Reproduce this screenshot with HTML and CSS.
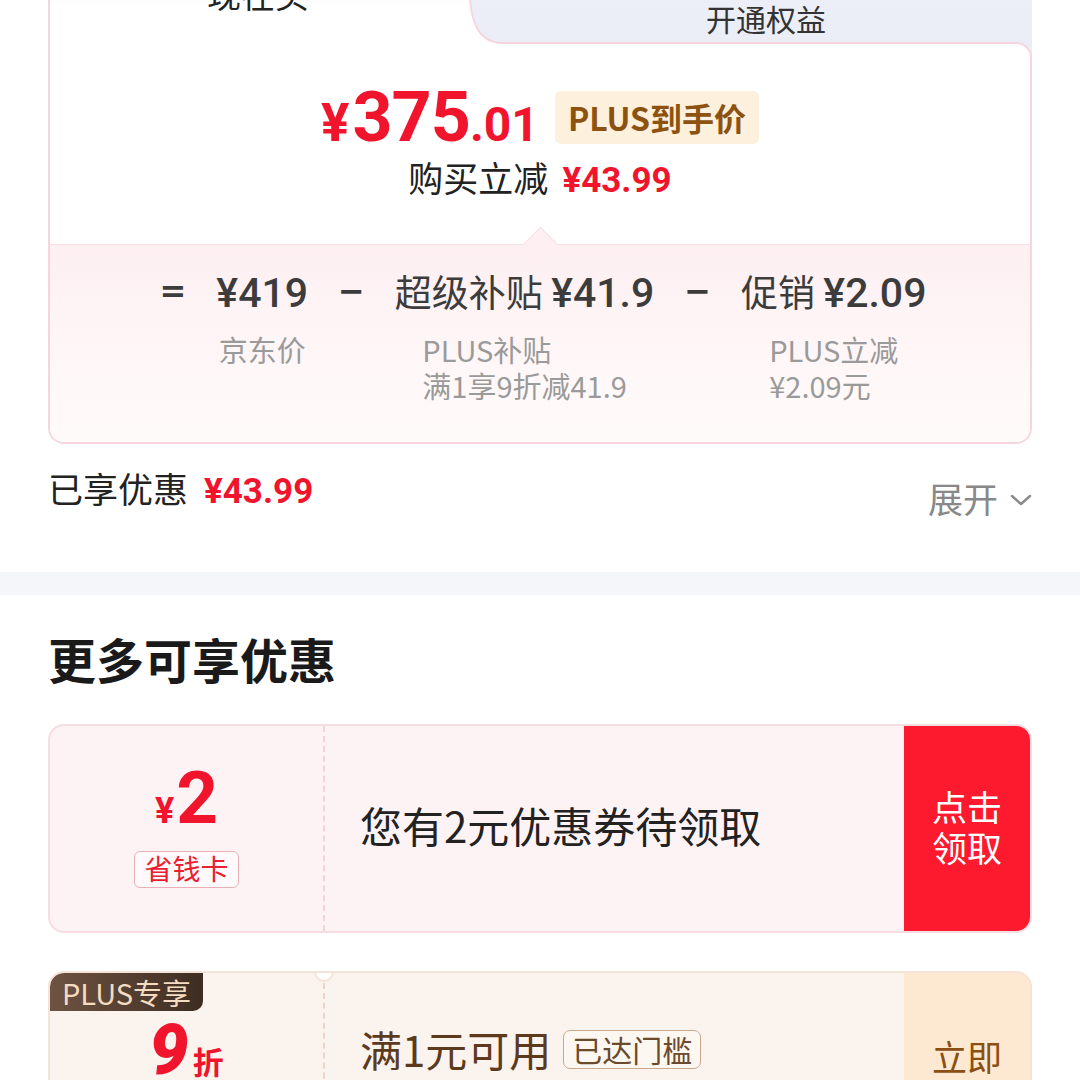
FILE: index.html
```html
<!DOCTYPE html>
<html lang="zh-CN">
<head>
<meta charset="utf-8">
<title>优惠明细</title>
<link rel="stylesheet" href="styles.css">
</head>
<body>
<div class="page">
  <section class="price-section">
    <div class="price-card">
      <div class="tabs">
        <div class="tab-now">现在买</div>
        <svg class="tab-curve" width="34" height="100" viewBox="0 0 34 100">
          <path d="M0 0 L2 0 L4 42 C6 62 11 83 34 85 L34 100 L0 100 Z" fill="#ffffff"/>
          <path d="M2 0 L4 42 C6 62 11 83 34 85" fill="none" stroke="#f6d6de" stroke-width="2"/>
        </svg>
        <div class="tab-plus">开通权益</div>
      </div>
      <div class="card-body">
        <div class="price-top">
          <div class="price-row">
            <span class="price"><span class="yen">¥</span><span class="int">375</span><span class="dec">.01</span></span>
            <span class="plus-badge">PLUS到手价</span>
          </div>
          <div class="save-row">购买立减<span class="save-num">¥43.99</span></div>
        </div>
        <div class="breakdown">
          <div class="bd-row">
            <span class="op">=</span>
            <div class="bd-col">
              <div class="bd-main"><span class="num">¥419</span></div>
              <div class="bd-sub">京东价</div>
            </div>
            <span class="op">−</span>
            <div class="bd-col">
              <div class="bd-main">超级补贴 <span class="num">¥41.9</span></div>
              <div class="bd-sub">PLUS补贴<br>满1享9折减41.9</div>
            </div>
            <span class="op">−</span>
            <div class="bd-col">
              <div class="bd-main">促销 <span class="num">¥2.09</span></div>
              <div class="bd-sub">PLUS立减<br>¥2.09元</div>
            </div>
          </div>
        </div>
      </div>
    </div>
    <div class="enjoyed">
      <div class="enjoyed-left">已享优惠<span class="enjoyed-num">¥43.99</span></div>
      <div class="expand">展开
        <svg class="chevron" width="22" height="14" viewBox="0 0 22 14"><polyline points="2,3 11,11 20,3" fill="none" stroke="#8a8a8a" stroke-width="2.4" stroke-linecap="round" stroke-linejoin="round"/></svg>
      </div>
    </div>
  </section>

  <div class="band"></div>

  <section class="more">
    <h2 class="more-title">更多可享优惠</h2>

    <div class="coupon coupon-red">
      <div class="cp-left">
        <div class="amt"><span class="amt-yen">¥</span><span class="amt-num">2</span></div>
        <div class="cp-tag">省钱卡</div>
      </div>
      <div class="cp-mid">您有2元优惠券待领取</div>
      <div class="cp-btn">点击<br>领取</div>
    </div>

    <div class="coupon coupon-plus">
      <div class="plus-tag">PLUS专享</div>
      <div class="notch"></div>
      <div class="cp-left cp-left-top">
        <div class="disc"><span class="disc-num">9</span><span class="disc-unit">折</span></div>
      </div>
      <div class="cp-mid cp-mid-top">满1元可用<span class="reach-tag">已达门槛</span></div>
      <div class="cp-btn cp-btn-plus">立即<br>领取</div>
    </div>
  </section>
</div>
</body>
</html>
```

FILE: styles.css
```css
html, body {
  margin: 0;
  padding: 0;
}
body {
  width: 1080px;
  height: 1080px;
  overflow: hidden;
  background: #ffffff;
  font-family: "Noto Sans CJK SC", "Noto Sans", sans-serif;
  color: #222222;
}

.price-section {
  padding: 0 48px;
}

.price-card {
  margin-top: -42px;
}

.tabs {
  display: flex;
  height: 100px;
  margin-bottom: -16px;
  background: linear-gradient(#eef0f8, #eaedf6);
}

.tab-now {
  flex: 0 0 418px;
  box-sizing: border-box;
  border-left: 2px solid #f6d6de;
  background: linear-gradient(#f6f6f6, #ffffff 50%);
  position: relative;
  z-index: 2;
  text-align: center;
  padding-top: 16px;
  font-size: 34px;
  line-height: 40px;
  color: #222222;
}

.tab-curve {
  flex: 0 0 34px;
  display: block;
  position: relative;
  z-index: 2;
}

.tab-plus {
  flex: 1;
  height: 84px;
  box-sizing: border-box;
  display: flex;
  align-items: flex-end;
  justify-content: center;
  padding-bottom: 6px;
  font-size: 30px;
  line-height: 36px;
  color: #333333;
}

.card-body {
  position: relative;
  z-index: 1;
  background: #ffffff;
  border: 2px solid #f6d6de;
  border-radius: 0 16px 16px 16px;
  overflow: hidden;
}

.price-top {
  padding: 38px 0 41px;
  text-align: center;
}

.price-row {
  display: flex;
  justify-content: center;
  align-items: center;
  gap: 16px;
  height: 70px;
}

.price {
  display: flex;
  align-items: baseline;
  color: #f0142d;
  font-family: Roboto, "Noto Sans", sans-serif;
  font-weight: 700;
  line-height: 1;
}
.yen {
  font-size: 53px;
  margin-right: 3px;
}
.int {
  font-size: 70px;
  letter-spacing: -1px;
}
.dec {
  font-size: 48px;
}

.plus-badge {
  background: #fdf0dc;
  color: #8d5210;
  font-weight: 700;
  font-size: 32px;
  height: 53px;
  line-height: 53px;
  padding: 0 13px;
  border-radius: 6px;
}

.save-row {
  margin-top: 3px;
  font-size: 35px;
  line-height: 44px;
  color: #222222;
}
.save-num {
  margin-left: 14px;
  color: #f0142d;
  font-family: Roboto, "Noto Sans", sans-serif;
  font-weight: 700;
}

.breakdown {
  position: relative;
  height: 198px;
  box-sizing: border-box;
  border-top: 1px solid #f9e1e6;
  background: linear-gradient(#fdeff2, #fff8f8 70%, #fffafa);
  padding-top: 22px;
}
.breakdown::before {
  content: "";
  position: absolute;
  left: 50%;
  top: -13px;
  width: 24px;
  height: 24px;
  margin-left: -12px;
  background: #fdeff2;
  border-top: 1px solid #f9e1e6;
  border-left: 1px solid #f9e1e6;
  transform: rotate(45deg);
}

.bd-row {
  display: flex;
  justify-content: center;
  align-items: flex-start;
  gap: 30px;
  margin-left: 6px;
}
.op {
  font-family: "DejaVu Sans", sans-serif;
  font-size: 32px;
  font-weight: 700;
  line-height: 48px;
  color: #3c3c3c;
}
.bd-col {
  display: flex;
  flex-direction: column;
  align-items: center;
}
.bd-main {
  font-size: 37px;
  line-height: 48px;
  color: #3c3c3c;
  white-space: nowrap;
}
.bd-main .num {
  font-family: Roboto, sans-serif;
  font-size: 41px;
  font-weight: 500;
}
.bd-sub {
  margin-top: 14px;
  font-size: 29px;
  line-height: 36px;
  color: #9a9a9a;
  text-align: left;
  white-space: nowrap;
}

.enjoyed {
  display: flex;
  align-items: center;
  justify-content: space-between;
  padding: 24px 0 0 0;
  height: 44px;
  margin-bottom: 60px;
}
.enjoyed-left {
  font-size: 35px;
  line-height: 44px;
  color: #222222;
}
.enjoyed-num {
  margin-left: 16px;
  color: #f0142d;
  font-family: Roboto, sans-serif;
  font-weight: 700;
}
.expand {
  display: flex;
  align-items: center;
  gap: 12px;
  padding-top: 16px;
  font-size: 35px;
  line-height: 44px;
  color: #888888;
}
.chevron {
  display: block;
  margin-top: 4px;
}

.band {
  height: 23px;
  background: #f4f6f9;
}

.more {
  padding: 0 48px;
}
.more-title {
  margin: 0 0 36px;
  padding: 33px 0 0 0;
  font-size: 48px;
  line-height: 60px;
  font-weight: 700;
  color: #1a1a1a;
}

.coupon {
  position: relative;
  display: flex;
  height: 209px;
  box-sizing: border-box;
  border: 2px solid #f6dde1;
  border-radius: 16px;
  overflow: hidden;
  background: #fdf3f4;
}
.coupon + .coupon {
  margin-top: 38px;
}

.cp-left {
  flex: 0 0 275px;
  box-sizing: border-box;
  border-right: 2px dashed #f1d4d8;
  display: flex;
  flex-direction: column;
  align-items: center;
  justify-content: center;
}

.amt {
  display: flex;
  align-items: baseline;
  color: #f0142d;
  font-family: Roboto, sans-serif;
  font-weight: 700;
  line-height: 56px;
}
.amt-yen {
  font-size: 36px;
  margin-right: 2px;
}
.amt-num {
  font-size: 73px;
}
.cp-tag {
  margin-top: 12px;
  height: 37px;
  box-sizing: border-box;
  padding: 0 9px;
  border: 1.5px solid #e9b1b7;
  border-radius: 6px;
  background: rgba(255, 255, 255, 0.5);
  font-size: 28px;
  line-height: 33px;
  color: #e8202f;
}

.cp-mid {
  flex: 1;
  display: flex;
  align-items: center;
  padding: 0 0 8px 35px;
  font-size: 42px;
  color: #222222;
}

.cp-btn {
  flex: 0 0 126px;
  display: flex;
  align-items: center;
  justify-content: center;
  text-align: center;
  padding-bottom: 5px;
  box-sizing: border-box;
  background: #fe1a2e;
  color: #ffffff;
  font-size: 35px;
  line-height: 41px;
}

.coupon-plus {
  border-color: #f4e3d6;
  background: #fbf3ee;
}
.plus-tag {
  position: absolute;
  left: 0;
  top: 0;
  z-index: 2;
  height: 38px;
  padding: 0 12px;
  background: linear-gradient(90deg, #6e5342, #3e2c21);
  color: #f4dcc1;
  font-size: 29px;
  line-height: 38px;
  border-radius: 14px 0 10px 0;
}
.notch {
  position: absolute;
  left: 264px;
  top: -11px;
  width: 16px;
  height: 16px;
  border-radius: 50%;
  background: #ffffff;
  border: 2px solid #f4e3d6;
  z-index: 2;
}
.cp-left-top {
  justify-content: flex-start;
  padding-top: 47px;
  border-right-color: #ecd5c4;
}
.disc {
  display: flex;
  align-items: baseline;
  color: #f0142d;
  font-family: Roboto, sans-serif;
  font-weight: 900;
  line-height: 60px;
}
.disc-num {
  font-size: 70px;
  font-style: italic;
}
.disc-unit {
  margin-left: 4px;
  font-family: "Noto Sans CJK SC", sans-serif;
  font-size: 31px;
  font-weight: 700;
}
.cp-mid-top {
  align-items: flex-start;
  padding-top: 54px;
  line-height: 44px;
  color: #5b3a1d;
}
.reach-tag {
  margin-left: 12px;
  margin-top: 3px;
  height: 39px;
  box-sizing: border-box;
  padding: 0 8px;
  border: 1.5px solid #cba88c;
  border-radius: 7px;
  background: #fdf7f1;
  font-size: 30px;
  line-height: 36px;
  color: #6b4a2e;
}
.cp-btn-plus {
  padding-bottom: 0;
  background: #fde9d1;
  color: #8b4f14;
}
```
